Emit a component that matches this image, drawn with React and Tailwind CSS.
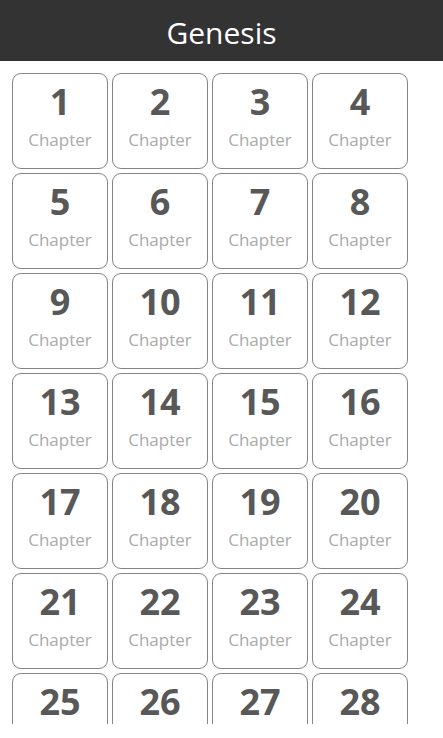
const chapters = Array.from({ length: 28 }, (_, i) => i + 1);

export default function App() {
  return (
    <div className="w-[443px] h-[738px] bg-white overflow-hidden font-['Open_Sans','Noto_Sans',sans-serif]">
      {/* Header */}
      <div className="h-[61px] bg-[#333333] flex items-center justify-center pt-[4px]">
        <h1 className="text-white text-[30px] leading-none font-normal">Genesis</h1>
      </div>

      {/* Chapter grid */}
      <div className="h-[663px] overflow-hidden pl-[12px] pt-[12px]">
        <div className="grid grid-cols-[repeat(4,96px)] gap-[4px]">
          {chapters.map((n) => (
            <div
              key={n}
              className="h-[96px] rounded-[9px] border border-[#858585] flex flex-col items-center pt-[8px]"
            >
              <span className="text-[36px] leading-[40px] font-bold text-[#585858]">{n}</span>
              <span className="mt-[6px] text-[17px] leading-[24px] text-[#aaaaaa]">Chapter</span>
            </div>
          ))}
        </div>
      </div>
    </div>
  );
}
